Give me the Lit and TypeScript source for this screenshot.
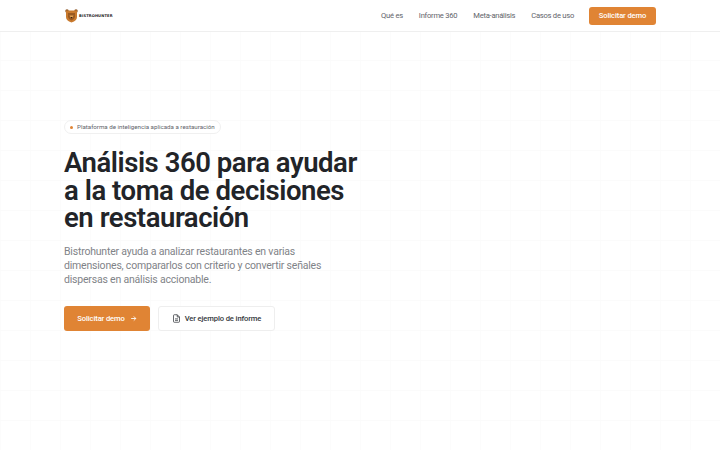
import { LitElement, html, css } from "lit";
import { customElement } from "lit/decorators.js";

@customElement("app-root")
export class AppRoot extends LitElement {
  static styles = css`
    :host { display: block; width: 720px; height: 450px; overflow: hidden; font-family: "Roboto", "Noto Sans", sans-serif; color: #1f2226;
      background-color: #fff;
      background-image: linear-gradient(#fbfbfb 1px, transparent 1px), linear-gradient(90deg, #fcfcfc 1px, transparent 1px);
      background-size: 30px 30px, 30px 30px; background-position: 0 0, 0 0; }
    .nav { height: 31px; border-bottom: 1px solid #efefef; background: #fff; padding: 0 64px; display: flex; align-items: center; justify-content: space-between; }
    .brand { display: flex; align-items: center; gap: 1px; font: 800 3.7px "DejaVu Sans", sans-serif; letter-spacing: .1px; color: #222; }
    .logo { margin-left: 1px; }
    .links { display: flex; align-items: center; gap: 16px; font-size: 7.6px; letter-spacing: -.25px; color: #5f646b; }
    .cta { background: #e08434; color: #fff; border-radius: 3px; font-weight: 500; letter-spacing: -.12px; }
    .nav .cta { width: 67px; margin-left: -1px; justify-content: center; height: 18px; display: flex; align-items: center; }
    .hero { padding: 88px 64px 0; }
    .badge { display: flex; width: fit-content; align-items: center; gap: 4px; height: 14px; box-sizing: border-box; padding: 0 5px; border: 1px solid #f0f0f0; border-radius: 7px; font-size: 6.2px; color: #5f646b; background: #fff; }
    .dot { width: 3px; height: 3px; border-radius: 50%; background: #e08434; }
    h1 { margin: 15px 0 0; font-size: 27.5px; line-height: 27.5px; font-weight: 600; letter-spacing: -.45px; color: #222428; }
    p { margin: 13px 0 0; width: 270px; font-size: 10.5px; line-height: 14px; font-weight: 400; letter-spacing: -.2px; color: #7f8388; }
    .actions { display: flex; gap: 8px; margin-top: 19px; }
    .btn { height: 25px; display: flex; align-items: center; justify-content: center; gap: 5px; box-sizing: border-box; border-radius: 3px; font-size: 7.6px; letter-spacing: -.12px; font-weight: 500; }
    .primary { width: 86px; background: #e08434; color: #fff; }
    .secondary { width: 117px; gap: 4px; border: 1px solid #eee; background: #fff; color: #33373c; }
  `;
  render() {
    return html`
      <div class="nav">
        <div class="brand">
          <svg class="logo" width="13" height="14" viewBox="0 0 26 28"><circle cx="4" cy="4" r="3.5" fill="#8a5220"/><circle cx="22" cy="4" r="3.5" fill="#8a5220"/><path d="M2 3h22v13q0 7-11 11Q2 23 2 16z" fill="#c97a2e"/><path d="M6 8h14v8q-1 4-7 7-6-3-7-7z" fill="#9a5a22"/><path d="M9 13h8l-2 4h-4z" fill="#e4a352"/><path d="M11 16h4l-2 3z" fill="#2a1c12"/></svg>
          <span>BISTROHUNTER</span>
        </div>
        <div class="links">
          <span>Qué es</span><span>Informe 360</span><span>Meta-análisis</span><span>Casos de uso</span>
          <span class="cta">Solicitar demo</span>
        </div>
      </div>
      <div class="hero">
        <div class="badge"><span class="dot"></span>Plataforma de inteligencia aplicada a restauración</div>
        <h1>Análisis 360 para ayudar<br />a la toma de decisiones<br />en restauración</h1>
        <p>Bistrohunter ayuda a analizar restaurantes en varias dimensiones, compararlos con criterio y convertir señales dispersas en análisis accionable.</p>
        <div class="actions">
          <div class="btn primary">Solicitar demo
            <svg width="7" height="7" viewBox="0 0 24 24" fill="none" stroke="currentColor" stroke-width="3"><path d="M4 12h16M13 5l7 7-7 7"/></svg>
          </div>
          <div class="btn secondary">
            <svg width="9" height="9" viewBox="0 0 24 24" fill="none" stroke="currentColor" stroke-width="2"><path d="M14 2H6a2 2 0 0 0-2 2v16a2 2 0 0 0 2 2h12a2 2 0 0 0 2-2V8z"/><path d="M14 2v6h6M8 13h8M8 17h8"/></svg>
            Ver ejemplo de informe
          </div>
        </div>
      </div>`;
  }
}
